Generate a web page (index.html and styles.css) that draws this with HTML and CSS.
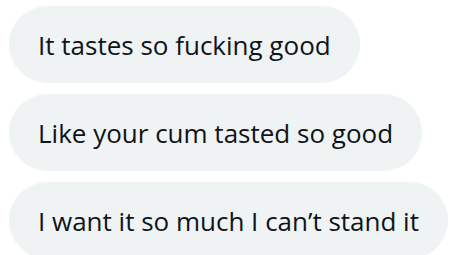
FILE: index.html
```html
<!DOCTYPE html>
<html>
<head>
<meta charset="utf-8">
<link rel="stylesheet" href="styles.css">
</head>
<body>
<div class="thread">
  <div class="bubble">It tastes so fucking good</div>
  <div class="bubble">Like your cum tasted so good</div>
  <div class="bubble">I want it so much I can’t stand it</div>
</div>
</body>
</html>
```
FILE: styles.css
```css
html, body {
  margin: 0;
  padding: 0;
  background: #ffffff;
  overflow: hidden;
}
.thread {
  display: flex;
  flex-direction: column;
  align-items: flex-start;
  gap: 11px;
  padding: 6px 0 0 9px;
}
.bubble {
  box-sizing: border-box;
  height: 77px;
  display: flex;
  align-items: center;
  padding: 0 29px;
  border-radius: 38.5px;
  background: #eff3f4;
  color: #0f1419;
  font-family: "Open Sans", sans-serif;
  font-size: 26px;
  white-space: nowrap;
}
```
